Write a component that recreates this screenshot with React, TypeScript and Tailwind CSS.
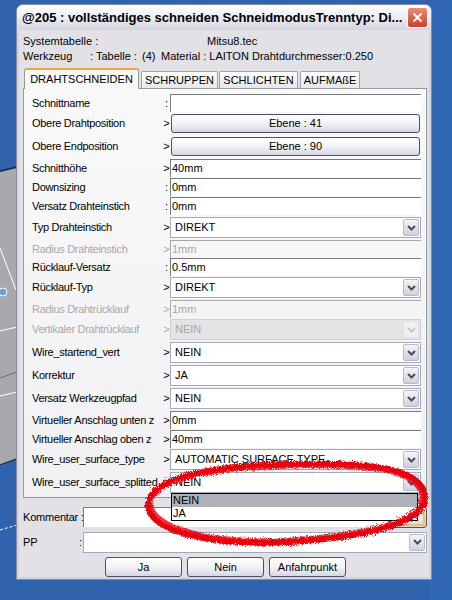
import React from "react";

type Row = {
  label: string;
  sep: string;
  kind: "input" | "button" | "combo";
  value: string;
  h: string;
  off?: boolean;
};

const rows: Row[] = [
  { label: "Schnittname", sep: ":", kind: "input", value: "", h: "h-[20px]" },
  { label: "Obere Drahtposition", sep: ">", kind: "button", value: "Ebene : 41", h: "h-[23px]" },
  { label: "Obere Endposition", sep: ">", kind: "button", value: "Ebene : 90", h: "h-[22px]" },
  { label: "Schnitthöhe", sep: ">", kind: "input", value: "40mm", h: "h-[19px]" },
  { label: "Downsizing", sep: ":", kind: "input", value: "0mm", h: "h-[19px]" },
  { label: "Versatz Drahteinstich", sep: ":", kind: "input", value: "0mm", h: "h-[20px]" },
  { label: "Typ Drahteinstich", sep: ">", kind: "combo", value: "DIREKT", h: "h-[23px]" },
  { label: "Radius Drahteinstich", sep: ">", kind: "input", value: "1mm", h: "h-[18px]", off: true },
  { label: "Rücklauf-Versatz", sep: ":", kind: "input", value: "0.5mm", h: "h-[19px]" },
  { label: "Rücklauf-Typ", sep: ">", kind: "combo", value: "DIREKT", h: "h-[23px]" },
  { label: "Radius Drahtrücklauf", sep: ">", kind: "input", value: "1mm", h: "h-[19px]", off: true },
  { label: "Vertikaler Drahtrücklauf", sep: ">", kind: "combo", value: "NEIN", h: "h-[23px]", off: true },
  { label: "Wire_startend_vert", sep: ">", kind: "combo", value: "NEIN", h: "h-[23px]" },
  { label: "Korrektur", sep: ">", kind: "combo", value: "JA", h: "h-[23px]" },
  { label: "Versatz Werkzeugpfad", sep: ">", kind: "combo", value: "NEIN", h: "h-[23px]" },
  { label: "Virtueller Anschlag unten z", sep: ">", kind: "input", value: "0mm", h: "h-[19px]" },
  { label: "Virtueller Anschlag oben z", sep: ">", kind: "input", value: "40mm", h: "h-[19px]" },
  { label: "Wire_user_surface_type", sep: ">", kind: "combo", value: "AUTOMATIC SURFACE TYPE", h: "h-[23px]" },
  { label: "Wire_user_surface_splitted", sep: ">", kind: "combo", value: "NEIN", h: "h-[23px]" },
];

const Chevron = ({ off }: { off?: boolean }) => (
  <svg width="9" height="6" viewBox="0 0 9 6">
    <path d="M1 1l3.5 3.5L8 1" fill="none" stroke={off ? "#c8c8cc" : "#4a4c5c"} strokeWidth="2" />
  </svg>
);

const Combo = ({ value, off, w }: { value: string; off?: boolean; w: string }) => (
  <div
    className={`flex items-center h-[21px] border ${w} ${
      off ? "border-[#cfcfd4] bg-[#e4e4e6] text-[#a6a6a6]" : "border-[#a4abb8] bg-white text-black"
    }`}
  >
    <span className="flex-1 pl-[4px] whitespace-nowrap overflow-hidden">{value}</span>
    <span
      className={`mr-[1px] w-[16px] h-[17px] flex items-center justify-center rounded-[2px] border ${
        off ? "border-[#e0e0e4] bg-[#f0f0f2]" : "border-[#b7bac8] bg-gradient-to-b from-[#f4f4f8] to-[#cfd1dc]"
      }`}
    >
      <Chevron off={off} />
    </span>
  </div>
);

const XpButton = ({ children, w }: { children: React.ReactNode; w: string }) => (
  <div
    className={`${w} h-[20px] flex items-center justify-center rounded-[3px] border border-[#4b5066] bg-gradient-to-b from-white via-[#f3f3f6] to-[#d6d8e2] text-black`}
  >
    {children}
  </div>
);

const Field = ({ row }: { row: Row }) => {
  if (row.kind === "combo") return <Combo value={row.value} off={row.off} w="w-[251px]" />;
  if (row.kind === "button")
    return (
      <div className="pl-[1px]">
        <div className="w-[249px] h-[19px] flex items-center justify-center rounded-[3px] border border-[#4b5066] bg-gradient-to-b from-white via-[#f1f2f6] to-[#d4d7e3]">
          {row.value}
        </div>
      </div>
    );
  return (
    <div
      className={`w-[251px] h-[18px] flex items-center pl-[1px] border-t border-l ${
        row.off ? "border-[#a9a9a9] text-[#a6a6a6]" : "border-[#7a7a7a] bg-white text-black"
      }`}
    >
      {row.value}
    </div>
  );
};

const Desktop = () => (
  <svg className="absolute inset-0" width="452" height="600" viewBox="0 0 452 600">
    <rect width="452" height="600" fill="#2f63ae" />
    <rect x="430" width="22" height="600" fill="#3068b6" />
    <polygon points="0,172 17,168 17,460 0,466" fill="#a8a9ad" />
    <line x1="0" y1="171" x2="17" y2="167" stroke="#1c2c48" strokeWidth="1.5" />
    <line x1="0" y1="248" x2="16" y2="290" stroke="#ffffff" strokeWidth="1" />
    <circle cx="3" cy="292" r="4" fill="#6f9fd8" stroke="#ffffff" strokeWidth="1" />
    <line x1="0" y1="331" x2="17" y2="327" stroke="#ffffff" strokeWidth="1" />
    <line x1="0" y1="396" x2="17" y2="392" stroke="#ffffff" strokeWidth="1" />
    <line x1="0" y1="378" x2="17" y2="372" stroke="#6d6e74" strokeWidth="1" />
    <line x1="0" y1="465" x2="17" y2="459" stroke="#1c2c48" strokeWidth="1.5" />
    <line x1="0" y1="530" x2="17" y2="525" stroke="#ffffff" strokeWidth="1" strokeDasharray="3 2" />
  </svg>
);

// hand drawn red marker round the open list
const Annotation = () => (
  <svg className="absolute inset-0 pointer-events-none" width="452" height="600" viewBox="0 0 452 600">
    <defs>
      <filter id="spray" x="-5%" y="-20%" width="110%" height="140%">
        <feTurbulence type="fractalNoise" baseFrequency="1.4" numOctaves="2" seed="3" result="n" />
        <feDisplacementMap in="SourceGraphic" in2="n" scale="6" />
      </filter>
    </defs>
    <g filter="url(#spray)" fill="none" stroke="#e8000a">
      <path
        d="M148,505 C150,480 200,466 290,464 C380,462 420,470 425,495 C428,520 380,536 290,542 C210,546 150,532 148,505 Z"
        strokeWidth="6"
      />
      <path
        d="M151,503 C154,482 204,469 290,467 C378,465 417,472 421,496 C423,518 378,533 290,539 C212,543 154,528 151,503 Z"
        strokeWidth="3"
        opacity="0.8"
      />
    </g>
  </svg>
);

export default function App() {
  return (
    <div className="relative w-[452px] h-[600px] overflow-hidden font-['Liberation_Sans',Arial,sans-serif] text-[11px] text-black">
      <Desktop />
      <div className="relative pl-[16px] pt-[4px]">
        <div className="w-[416px] h-[576px] rounded-t-[7px] border border-[#8b8c9c] bg-[#d4d4dc] flex flex-col">
          <div className="h-[25px] flex items-center justify-between pl-[5px] pr-[3px] rounded-t-[6px] bg-gradient-to-b from-white via-[#ececf2] to-[#d4d4de]">
            <span className="font-bold text-[13px] whitespace-nowrap">
              @205 : vollständiges schneiden SchneidmodusTrenntyp: Di...
            </span>
            <span className="w-[21px] h-[21px] flex items-center justify-center rounded-[3px] border border-white bg-gradient-to-b from-[#ec8a74] to-[#c7402c]">
              <svg width="11" height="11" viewBox="0 0 11 11">
                <path d="M1.5 1.5l8 8M9.5 1.5l-8 8" stroke="#fff" strokeWidth="2" />
              </svg>
            </span>
          </div>

          <div className="mx-[2px] h-[547px] bg-[#e2e1e6] pl-[4px] pr-[2px]">
            <div className="pt-[4px] leading-[15px]">
              <div className="flex">
                <span className="w-[184px]">Systemtabelle :</span>
                <span>Mitsu8.tec</span>
              </div>
              <div className="flex whitespace-nowrap">
                <span className="w-[67px]">Werkzeug</span>
                <span className="w-[52px]">: Tabelle :</span>
                <span className="w-[19px]">(4)</span>
                <span className="w-[91px]">Material : LAITON</span>
                <span>Drahtdurchmesser:0.250</span>
              </div>
            </div>

            <div className="mt-[4px] h-[20px] flex items-end pl-[1px]">
              <div className="relative z-10 -mb-[1px] w-[115px] h-[21px] rounded-t-[3px] border-x border-t-2 border-x-[#919b9c] border-t-[#f0a43c] bg-[#f8f8f9] flex items-center justify-center">
                DRAHTSCHNEIDEN
              </div>
              <div className="ml-[2px] w-[77px] h-[17px] rounded-t-[2px] border border-b-0 border-[#9ea4ae] bg-gradient-to-b from-white to-[#e6e6ec] flex items-center justify-center">
                SCHRUPPEN
              </div>
              <div className="ml-[1px] w-[79px] h-[17px] rounded-t-[2px] border border-b-0 border-[#9ea4ae] bg-gradient-to-b from-white to-[#e6e6ec] flex items-center justify-center">
                SCHLICHTEN
              </div>
              <div className="ml-[2px] w-[60px] h-[17px] rounded-t-[2px] border border-b-0 border-[#9ea4ae] bg-gradient-to-b from-white to-[#e6e6ec] flex items-center justify-center">
                AUFMAßE
              </div>
            </div>

            <div className="h-[410px] border border-[#919b9c] bg-gradient-to-b from-[#f9f9fa] to-[#f1f1f3] pt-[5px] pl-[8px]">
              {rows.map((r) => (
                <div key={r.label} className={`flex items-start ${r.h}`}>
                  <div
                    className={`w-[131px] flex items-center whitespace-nowrap tracking-[-0.3px] ${
                      r.off ? "text-[#a8a8a8]" : ""
                    } ${r.kind === "combo" ? "h-[21px]" : "h-[18px]"}`}
                  >
                    {r.label}
                  </div>
                  <div
                    className={`w-[7px] flex items-center justify-center ${
                      r.kind === "combo" ? "h-[21px]" : "h-[18px]"
                    } ${r.off ? "text-[#a8a8a8]" : ""}`}
                  >
                    {r.sep}
                  </div>
                  <Field row={r} />
                </div>
              ))}
            </div>

            <div className="mt-[9px] flex items-center h-[20px]">
              <span className="w-[60px] whitespace-nowrap tracking-[-0.2px]">Kommentar :</span>
              <div className="w-[307px] h-[20px] border-t border-l border-[#7a7a7a] bg-white" />
              <div className="w-[37px] h-[21px] rounded-[3px] border border-[#4b5066] bg-gradient-to-b from-white to-[#d6d8e2] p-[1px]">
                <div className="w-full h-full rounded-[2px] border-2 border-[#f8c050]" />
              </div>
            </div>

            <div className="mt-[5px] flex items-center h-[20px]">
              <span className="w-[56px]">PP</span>
              <span className="w-[4px]">:</span>
              <Combo value="" w="w-[344px]" />
            </div>

            <div className="mt-[5px] flex gap-[5px] pl-[82px]">
              <XpButton w="w-[77px]">Ja</XpButton>
              <XpButton w="w-[77px]">Nein</XpButton>
              <XpButton w="w-[77px]">Anfahrpunkt</XpButton>
            </div>
          </div>
        </div>
      </div>

      <div className="absolute left-[171px] top-[493px] w-[247px] border border-black bg-white leading-[13px]">
        <div className="bg-[#b0b0b8] pl-[1px]">NEIN</div>
        <div className="pl-[1px]">JA</div>
      </div>

      <Annotation />
    </div>
  );
}
